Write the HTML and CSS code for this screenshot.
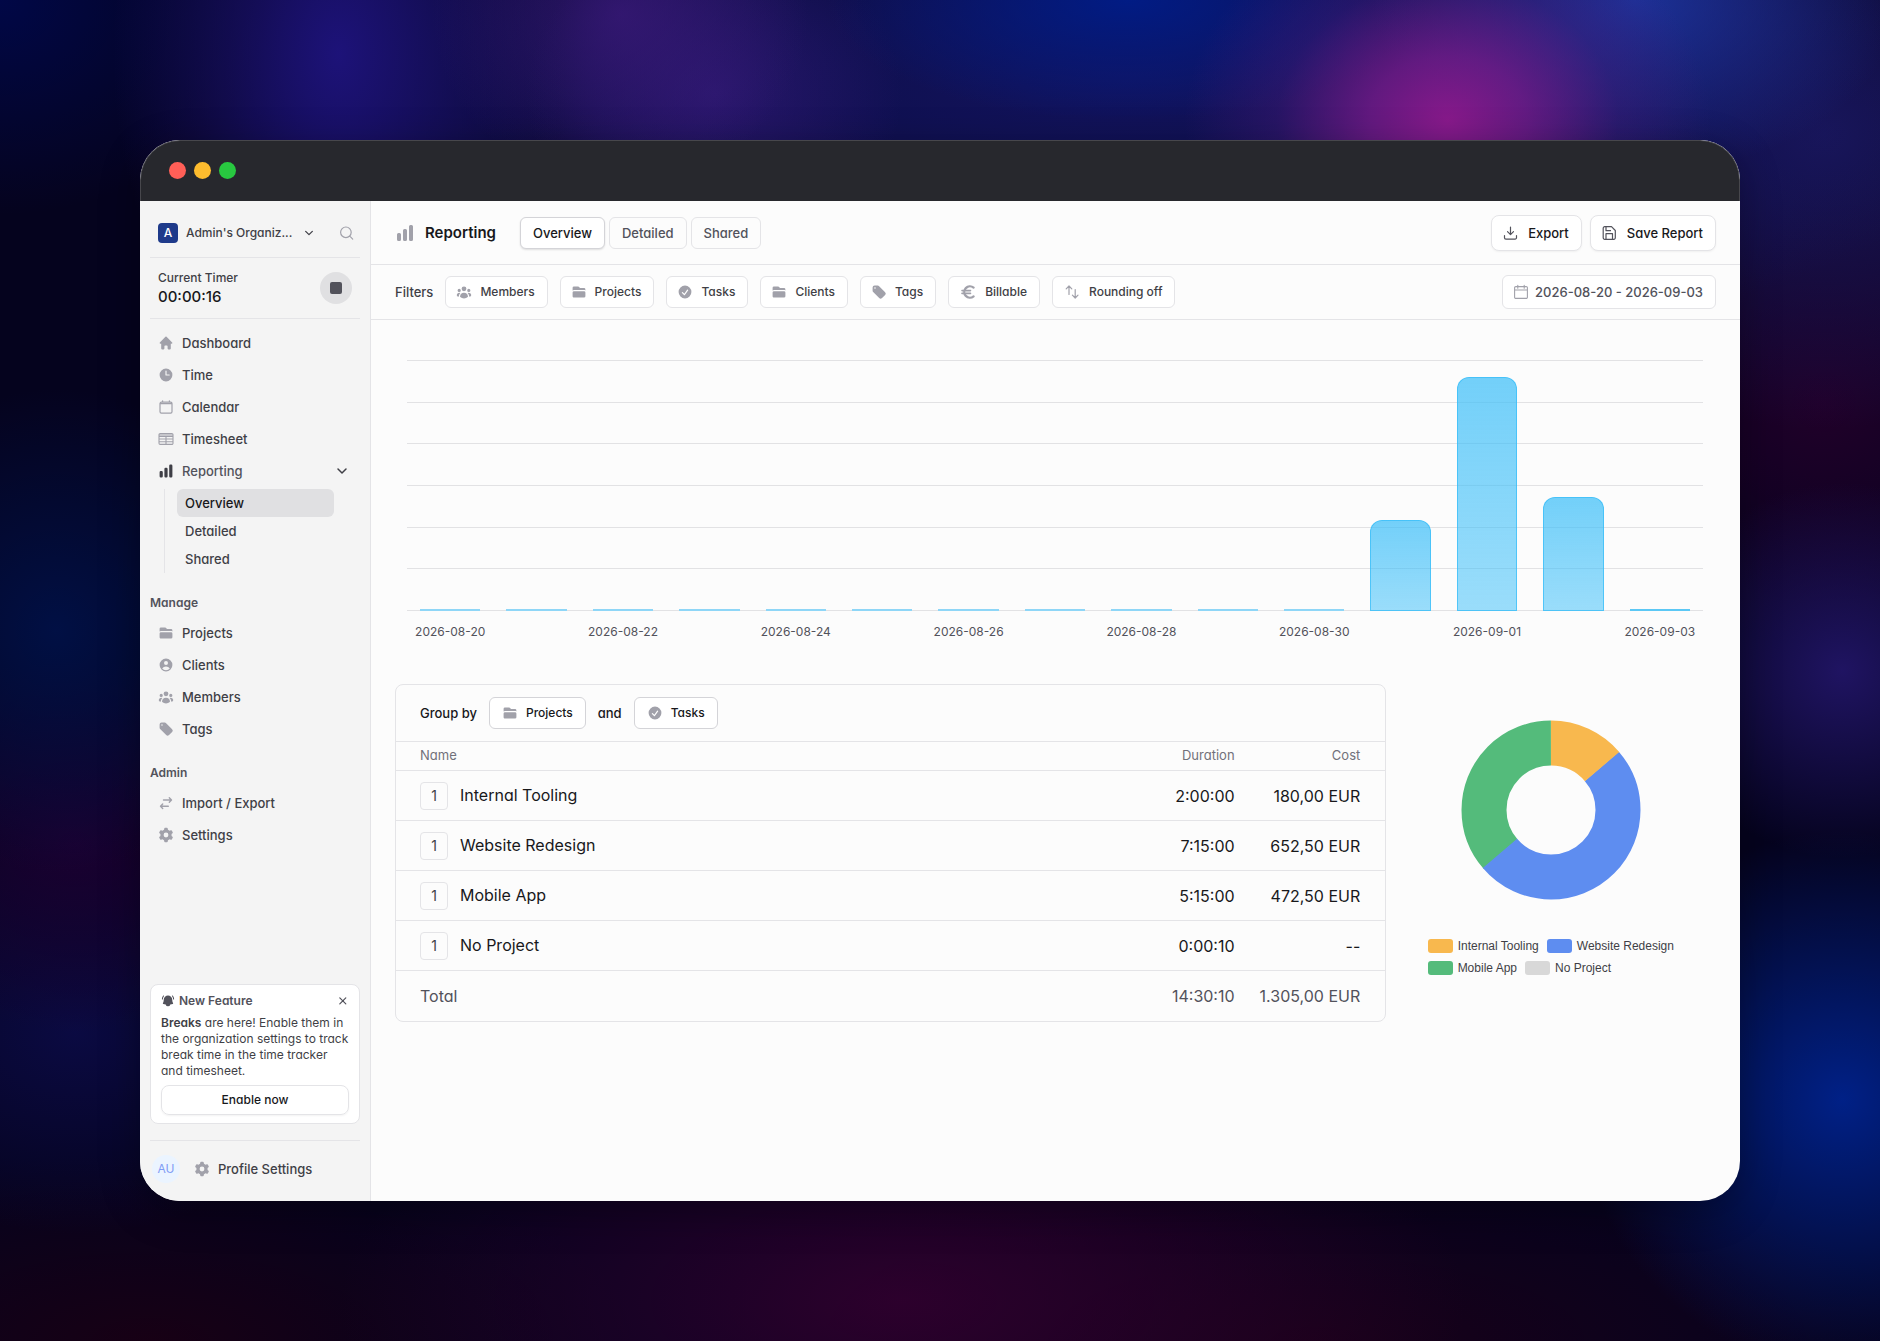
FILE: index.html
```html
<!DOCTYPE html>
<html lang="en">
<head>
    <meta charset="UTF-8">
    <meta name="viewport" content="width=device-width, initial-scale=1.0">
    <title>Reporting - Overview</title>
    <link rel="stylesheet" href="styles.css">
</head>
<body>
    <!-- icon sprite -->
    <svg class="sprite" aria-hidden="true">
        <symbol id="i-home" viewBox="0 0 20 20"><path fill="currentColor" d="M9.293 2.293a1 1 0 0 1 1.414 0l7 7A1 1 0 0 1 17 11h-1v6a1 1 0 0 1-1 1h-2a1 1 0 0 1-1-1v-3a1 1 0 0 0-1-1H9a1 1 0 0 0-1 1v3a1 1 0 0 1-1 1H5a1 1 0 0 1-1-1v-6H3a1 1 0 0 1-.707-1.707l7-7Z"/></symbol>
        <symbol id="i-clock" viewBox="0 0 20 20"><path fill="currentColor" fill-rule="evenodd" d="M10 18a8 8 0 1 0 0-16 8 8 0 0 0 0 16Zm.75-13a.75.75 0 0 0-1.5 0v5c0 .414.336.75.75.75h4a.75.75 0 0 0 0-1.5h-3.25V5Z"/></symbol>
        <symbol id="i-calendar" viewBox="0 0 16 16"><path fill="none" stroke="currentColor" stroke-width="1.2" stroke-linecap="round" d="M3.4 3.2h9.200a1.400 1.400 0 0 1 1.400 1.400v8.200a1.400 1.400 0 0 1-1.400 1.400H3.400a1.400 1.400 0 0 1-1.400-1.400V4.600a1.400 1.400 0 0 1 1.400-1.400ZM4.600 1.800v1.400M11.400 1.800v1.400M2.300 4.700h11.400"/></symbol>
        <symbol id="i-table" viewBox="0 0 16 16"><path fill="none" stroke="currentColor" stroke-width="1.100" d="M2.200 2.600h11.600a1.200 1.200 0 0 1 1.200 1.200v8.400a1.200 1.200 0 0 1-1.200 1.200H2.200A1.200 1.200 0 0 1 1 12.200V3.800a1.200 1.200 0 0 1 1.200-1.200ZM1 5.400h14M1 8h14M1 10.700h14M8 5.400v8"/><path fill="currentColor" opacity=".4" d="M1 3h14v2.400H1z"/></symbol>
        <symbol id="i-chart" viewBox="0 0 20 20"><path fill="currentColor" d="M15.500 2A1.500 1.500 0 0 0 14 3.500v13a1.500 1.500 0 0 0 1.500 1.500h1a1.500 1.500 0 0 0 1.500-1.500v-13A1.500 1.500 0 0 0 16.500 2h-1ZM9.500 6A1.500 1.500 0 0 0 8 7.500v9A1.500 1.500 0 0 0 9.500 18h1a1.500 1.500 0 0 0 1.500-1.500v-9A1.500 1.500 0 0 0 10.500 6h-1ZM3.500 10A1.500 1.500 0 0 0 2 11.500v5A1.500 1.500 0 0 0 3.500 18h1A1.500 1.500 0 0 0 6 16.500v-5A1.500 1.500 0 0 0 4.500 10h-1Z"/></symbol>
        <symbol id="i-folder" viewBox="0 0 20 20"><path fill="currentColor" d="M3.750 3A1.750 1.750 0 0 0 2 4.750v3.260a3.235 3.235 0 0 1 1.750-.510h12.500c.644 0 1.245.188 1.750.510V6.750A1.750 1.750 0 0 0 16.250 5h-4.836a.25.25 0 0 1-.177-.073L9.823 3.513A1.750 1.750 0 0 0 8.586 3H3.750ZM3.750 9A1.750 1.750 0 0 0 2 10.750v4.500c0 .966.784 1.750 1.750 1.750h12.500A1.750 1.750 0 0 0 18 15.250v-4.500A1.750 1.750 0 0 0 16.250 9H3.750Z"/></symbol>
        <symbol id="i-user" viewBox="0 0 20 20"><path fill="currentColor" fill-rule="evenodd" d="M18 10a8 8 0 1 1-16 0 8 8 0 0 1 16 0Zm-5.500-2.500a2.500 2.500 0 1 1-5 0 2.500 2.500 0 0 1 5 0ZM10 12a5.990 5.990 0 0 0-4.793 2.390A6.483 6.483 0 0 0 10 16.500a6.483 6.483 0 0 0 4.793-2.110A5.990 5.990 0 0 0 10 12Z"/></symbol>
        <symbol id="i-group" viewBox="0 0 20 20"><path fill="currentColor" d="M10 9a3 3 0 1 0 0-6 3 3 0 0 0 0 6ZM6 8a2 2 0 1 1-4 0 2 2 0 0 1 4 0ZM1.490 15.326a.78.78 0 0 1-.358-.442 3 3 0 0 1 4.308-3.516 6.484 6.484 0 0 0-1.905 3.959c-.023.222-.014.442.025.654a4.970 4.970 0 0 1-2.070-.655ZM16.440 15.980a4.970 4.970 0 0 0 2.070-.654.78.78 0 0 0 .357-.442 3 3 0 0 0-4.308-3.517 6.484 6.484 0 0 1 1.907 3.960 2.320 2.320 0 0 1-.026.654ZM18 8a2 2 0 1 1-4 0 2 2 0 0 1 4 0ZM5.304 16.190a.844.844 0 0 1-.277-.710 5 5 0 0 1 9.947 0 .843.843 0 0 1-.277.710A6.975 6.975 0 0 1 10 18a6.974 6.974 0 0 1-4.696-1.810Z"/></symbol>
        <symbol id="i-tag" viewBox="0 0 20 20"><path fill="currentColor" fill-rule="evenodd" d="M4.500 2A2.500 2.500 0 0 0 2 4.500v3.879a2.500 2.500 0 0 0 .732 1.767l7.500 7.500a2.500 2.500 0 0 0 3.536 0l3.878-3.878a2.500 2.500 0 0 0 0-3.536l-7.500-7.500A2.500 2.500 0 0 0 8.380 2H4.500ZM5 6a1 1 0 1 0 0-2 1 1 0 0 0 0 2Z"/></symbol>
        <symbol id="i-check" viewBox="0 0 20 20"><path fill="currentColor" fill-rule="evenodd" d="M10 18a8 8 0 1 0 0-16 8 8 0 0 0 0 16Zm3.857-9.809a.75.75 0 0 0-1.214-.882l-3.483 4.790-1.880-1.880a.75.75 0 1 0-1.060 1.061l2.500 2.500a.75.75 0 0 0 1.137-.089l4-5.500Z"/></symbol>
        <symbol id="i-cog" viewBox="0 0 20 20"><path fill="currentColor" fill-rule="evenodd" d="M7.840 1.804A1 1 0 0 1 8.820 1h2.360a1 1 0 0 1 .98.804l.331 1.652a6.993 6.993 0 0 1 1.929 1.115l1.598-.540a1 1 0 0 1 1.186.447l1.180 2.044a1 1 0 0 1-.205 1.251l-1.267 1.113a7.047 7.047 0 0 1 0 2.228l1.267 1.113a1 1 0 0 1 .206 1.250l-1.180 2.045a1 1 0 0 1-1.187.447l-1.598-.540a6.993 6.993 0 0 1-1.929 1.115l-.330 1.652a1 1 0 0 1-.980.804H8.820a1 1 0 0 1-.980-.804l-.331-1.652a6.993 6.993 0 0 1-1.929-1.115l-1.598.540a1 1 0 0 1-1.186-.447l-1.180-2.044a1 1 0 0 1 .205-1.251l1.267-1.114a7.050 7.050 0 0 1 0-2.227L1.821 7.773a1 1 0 0 1-.206-1.250l1.180-2.045a1 1 0 0 1 1.187-.447l1.598.540A6.992 6.992 0 0 1 7.510 3.456l.330-1.652ZM10 13a3 3 0 1 0 0-6 3 3 0 0 0 0 6Z"/></symbol>
        <symbol id="i-swap" viewBox="0 0 16 16"><path fill="none" stroke="currentColor" stroke-width="1.400" stroke-linecap="round" stroke-linejoin="round" d="M5.500 5h7.800M11.300 2.800 13.500 5l-2.200 2.200M10.300 11.300H2.700M4.700 9.100l-2.200 2.200 2.200 2.200"/></symbol>
        <symbol id="i-updown" viewBox="0 0 18 18"><path fill="none" stroke="currentColor" stroke-width="1.200" stroke-linecap="round" stroke-linejoin="round" d="M6 11.500V3.200M3.200 5.800 6 3l2.800 2.800M12.200 6.500v8.300M9.400 12.200l2.800 2.800 2.800-2.800"/></symbol>
        <symbol id="i-euro" viewBox="0 0 18 18"><path fill="none" stroke="currentColor" stroke-width="2.300" stroke-linecap="round" d="M14.600 4.600A5.700 5.700 0 1 0 14.600 13.400"/><path fill="none" stroke="currentColor" stroke-width="1.600" stroke-linecap="round" d="M3 7.600h8.500M3 10.400h8.500"/></symbol>
        <symbol id="i-search" viewBox="0 0 16 16"><path fill="none" stroke="currentColor" stroke-width="1.200" stroke-linecap="round" d="M13.200 7.300a5.300 5.300 0 1 1-10.600 0 5.300 5.300 0 0 1 10.600 0ZM11.800 11.200l2.900 2.900"/></symbol>
        <symbol id="i-down" viewBox="0 0 12 12"><path fill="none" stroke="currentColor" stroke-width="1.500" stroke-linecap="round" stroke-linejoin="round" d="m2 4 4 4 4-4"/></symbol>
        <symbol id="i-close" viewBox="0 0 12 12"><path fill="none" stroke="currentColor" stroke-width="1.200" stroke-linecap="round" d="m2.800 2.800 6 6M8.800 2.800l-6 6"/></symbol>
        <symbol id="i-bell" viewBox="0 0 20 20"><path fill="currentColor" d="M4.200 3.300a.75.75 0 1 0-1.160-.950A7.960 7.960 0 0 0 1.250 7.100a.75.75 0 0 0 1.500.050A6.470 6.470 0 0 1 4.200 3.300ZM16.960 2.350a.75.75 0 1 0-1.160.950 6.470 6.470 0 0 1 1.450 3.850.75.75 0 0 0 1.500-.050 7.960 7.960 0 0 0-1.790-4.750Z"/><path fill="currentColor" d="M10 2a6 6 0 0 0-6 6c0 1.900-.450 3.700-1.260 5.290a.75.75 0 0 0 .515 1.076c1.144.250 2.310.430 3.497.540a3.300 3.300 0 0 0 6.496 0c1.187-.110 2.353-.290 3.497-.540a.75.75 0 0 0 .515-1.076A11.950 11.950 0 0 1 16 8a6 6 0 0 0-6-6Z"/></symbol>
        <symbol id="i-download" viewBox="0 0 16 16"><path fill="none" stroke="currentColor" stroke-width="1.200" stroke-linecap="round" stroke-linejoin="round" d="M8.500 2v7.500M5.500 6.700l3 3 3-3M2.500 10.500v2.200a1.400 1.400 0 0 0 1.400 1.400h9.200a1.400 1.400 0 0 0 1.400-1.400v-2.200"/></symbol>
        <symbol id="i-save" viewBox="0 0 16 16"><path fill="none" stroke="currentColor" stroke-width="1.200" stroke-linejoin="round" d="M3.700 1.700h6.800l3.800 3.800v7.300a1.500 1.500 0 0 1-1.500 1.500H3.700a1.500 1.500 0 0 1-1.500-1.500V3.200a1.500 1.500 0 0 1 1.500-1.500ZM5 14V8.700h6.500V14M5 2v3.700h5"/></symbol>
        <symbol id="i-date" viewBox="0 0 16 16"><path fill="none" stroke="currentColor" stroke-width="1.100" stroke-linecap="round" d="M2.800 2.600h10.400a1.200 1.200 0 0 1 1.200 1.200v9.400a1.200 1.200 0 0 1-1.200 1.200H2.800a1.200 1.200 0 0 1-1.200-1.200V3.800a1.200 1.200 0 0 1 1.200-1.200ZM4.800 1.200v3M11.200 1.200v3M1.600 6h12.800"/></symbol>
    </svg>

    <div class="window">
        <div class="titlebar">
            <span class="light red"></span>
            <span class="light yellow"></span>
            <span class="light green"></span>
        </div>

        <div class="app">
            <aside class="sidebar">
                <div class="org">
                    <button class="org-btn">
                        <span class="org-logo">A</span>
                        <span class="org-name">Admin's Organiz...</span>
                        <svg class="icon-xs"><use href="#i-down"/></svg>
                    </button>
                    <button class="icon-btn" aria-label="Search"><svg class="icon"><use href="#i-search"/></svg></button>
                </div>

                <div class="timer">
                    <div>
                        <div class="timer-label">Current Timer</div>
                        <div class="timer-value">00:00:16</div>
                    </div>
                    <button class="stop-btn" aria-label="Stop timer"><span class="stop"></span></button>
                </div>

                <nav class="nav">
                    <a href="#" class="nav-link"><svg class="icon"><use href="#i-home"/></svg>Dashboard</a>
                    <a href="#" class="nav-link"><svg class="icon"><use href="#i-clock"/></svg>Time</a>
                    <a href="#" class="nav-link"><svg class="icon"><use href="#i-calendar"/></svg>Calendar</a>
                    <a href="#" class="nav-link"><svg class="icon"><use href="#i-table"/></svg>Timesheet</a>
                    <button class="nav-link nav-open"><svg class="icon"><use href="#i-chart"/></svg>Reporting<svg class="icon-sm chevron"><use href="#i-down"/></svg></button>
                    <div class="subnav">
                        <a href="#" class="subnav-link active">Overview</a>
                        <a href="#" class="subnav-link">Detailed</a>
                        <a href="#" class="subnav-link">Shared</a>
                    </div>
                    <div class="nav-title">Manage</div>
                    <a href="#" class="nav-link"><svg class="icon"><use href="#i-folder"/></svg>Projects</a>
                    <a href="#" class="nav-link"><svg class="icon"><use href="#i-user"/></svg>Clients</a>
                    <a href="#" class="nav-link"><svg class="icon"><use href="#i-group"/></svg>Members</a>
                    <a href="#" class="nav-link"><svg class="icon"><use href="#i-tag"/></svg>Tags</a>
                    <div class="nav-title">Admin</div>
                    <a href="#" class="nav-link"><svg class="icon"><use href="#i-swap"/></svg>Import / Export</a>
                    <a href="#" class="nav-link"><svg class="icon"><use href="#i-cog"/></svg>Settings</a>
                </nav>

                <div class="feature">
                    <div class="feature-head">
                        <svg class="icon-bell"><use href="#i-bell"/></svg>
                        <span>New Feature</span>
                        <button class="icon-btn" aria-label="Close"><svg class="icon-sm"><use href="#i-close"/></svg></button>
                    </div>
                    <p><strong>Breaks</strong> are here! Enable them in the organization settings to track break time in the time tracker and timesheet.</p>
                    <button class="feature-btn">Enable now</button>
                </div>

                <div class="profile">
                    <span class="avatar">AU</span>
                    <a href="#" class="profile-link"><svg class="icon"><use href="#i-cog"/></svg>Profile Settings</a>
                </div>
            </aside>

            <main class="main">
                <header class="header">
                    <svg class="icon-lg"><use href="#i-chart"/></svg>
                    <h1>Reporting</h1>
                    <div class="tabs">
                        <a href="#" class="tab active">Overview</a>
                        <a href="#" class="tab">Detailed</a>
                        <a href="#" class="tab">Shared</a>
                    </div>
                    <div class="actions">
                        <button class="action-btn"><svg class="icon"><use href="#i-download"/></svg>Export</button>
                        <button class="action-btn"><svg class="icon"><use href="#i-save"/></svg>Save Report</button>
                    </div>
                </header>

                <div class="filters">
                    <span class="filters-label">Filters</span>
                    <div class="filter-list">
                        <button class="filter-btn"><svg class="icon"><use href="#i-group"/></svg>Members</button>
                        <button class="filter-btn"><svg class="icon"><use href="#i-folder"/></svg>Projects</button>
                        <button class="filter-btn"><svg class="icon"><use href="#i-check"/></svg>Tasks</button>
                        <button class="filter-btn"><svg class="icon"><use href="#i-folder"/></svg>Clients</button>
                        <button class="filter-btn"><svg class="icon"><use href="#i-tag"/></svg>Tags</button>
                        <button class="filter-btn"><svg class="icon icon-md"><use href="#i-euro"/></svg>Billable</button>
                        <button class="filter-btn"><svg class="icon icon-md"><use href="#i-updown"/></svg>Rounding off</button>
                    </div>
                    <button class="date-btn"><svg class="icon"><use href="#i-date"/></svg>2026-08-20 - 2026-09-03</button>
                </div>

                <section class="chart">
                    <div class="plot">
                        <div class="gridlines"><i></i><i></i><i></i><i></i><i></i><i></i><i></i></div>
                        <div class="bars">
                            <span class="bar zero"></span>
                            <span class="bar zero"></span>
                            <span class="bar zero"></span>
                            <span class="bar zero"></span>
                            <span class="bar zero"></span>
                            <span class="bar zero"></span>
                            <span class="bar zero"></span>
                            <span class="bar zero"></span>
                            <span class="bar zero"></span>
                            <span class="bar zero"></span>
                            <span class="bar zero"></span>
                            <span class="bar" style="height: 36.4%"></span>
                            <span class="bar" style="height: 93.2%"></span>
                            <span class="bar" style="height: 45.3%"></span>
                            <span class="bar zero last"></span>
                        </div>
                    </div>
                    <div class="axis">
                        <span>2026-08-20</span><span></span>
                        <span>2026-08-22</span><span></span>
                        <span>2026-08-24</span><span></span>
                        <span>2026-08-26</span><span></span>
                        <span>2026-08-28</span><span></span>
                        <span>2026-08-30</span><span></span>
                        <span>2026-09-01</span><span></span>
                        <span>2026-09-03</span>
                    </div>
                </section>

                <section class="summary">
                    <div class="card">
                        <div class="group-by">
                            <span>Group by</span>
                            <button class="filter-btn strong"><svg class="icon"><use href="#i-folder"/></svg>Projects</button>
                            <span>and</span>
                            <button class="filter-btn strong"><svg class="icon"><use href="#i-check"/></svg>Tasks</button>
                        </div>
                        <table class="table">
                            <thead>
                                <tr><th class="name">Name</th><th>Duration</th><th>Cost</th></tr>
                            </thead>
                            <tbody>
                                <tr><td class="name"><button class="count">1</button>Internal Tooling</td><td>2:00:00</td><td>180,00 EUR</td></tr>
                                <tr><td class="name"><button class="count">1</button>Website Redesign</td><td>7:15:00</td><td>652,50 EUR</td></tr>
                                <tr><td class="name"><button class="count">1</button>Mobile App</td><td>5:15:00</td><td>472,50 EUR</td></tr>
                                <tr><td class="name"><button class="count">1</button>No Project</td><td>0:00:10</td><td>--</td></tr>
                            </tbody>
                            <tfoot>
                                <tr><td class="name">Total</td><td>14:30:10</td><td>1.305,00 EUR</td></tr>
                            </tfoot>
                        </table>
                    </div>

                    <div class="pie">
                        <svg class="donut" viewBox="0 0 180 180" role="img" aria-label="Duration by project">
                            <g fill="none" stroke-width="45" transform="rotate(-90 90 90)">
                                <circle cx="90" cy="90" r="67" pathLength="52210" stroke="#54bb7b" stroke-dasharray="19000 52210" stroke-dashoffset="-33200"/>
                                <circle cx="90" cy="90" r="67" pathLength="52210" stroke="#5e8df0" stroke-dasharray="26150 52210" stroke-dashoffset="-7150"/>
                                <circle cx="90" cy="90" r="67" pathLength="52210" stroke="#f8b84e" stroke-dasharray="7200 52210"/>
                            </g>
                        </svg>
                        <ul class="legend">
                            <li><span class="swatch orange"></span>Internal Tooling</li>
                            <li><span class="swatch blue"></span>Website Redesign</li>
                            <li><span class="swatch green"></span>Mobile App</li>
                            <li><span class="swatch gray"></span>No Project</li>
                        </ul>
                    </div>
                </section>
            </main>
        </div>
    </div>
</body>
</html>
```
FILE: styles.css
```css
* {
    box-sizing: border-box;
}
body {
    margin: 0;
    padding: 140px;
    min-height: 100vh;
    display: flex;
    font-family: Inter, "Liberation Sans", sans-serif;
    font-feature-settings: "cv11";
    font-size: 14px;
    line-height: 20px;
    color: #18181b;
    background-color: #05031e;
    background-image:
        radial-gradient(ellipse 14% 16% at 77% 9%, rgba(142, 26, 142, 0.95), rgba(125, 28, 142, 0.75) 30%, rgba(80, 28, 130, 0.35) 65%, transparent),
        radial-gradient(ellipse 14% 13% at 87% 0%, rgba(30, 55, 165, 0.85), transparent),
        radial-gradient(ellipse 16% 9% at 60% 0%, rgba(0, 28, 135, 0.95), transparent),
        radial-gradient(ellipse 10% 13% at 33% 1%, rgba(62, 26, 125, 0.7), transparent),
        radial-gradient(ellipse 10% 12% at 38% 7%, rgba(58, 28, 130, 0.6), transparent),
        radial-gradient(ellipse 12% 26% at 18% 4%, rgba(30, 19, 125, 0.95), rgba(24, 16, 100, 0.6) 55%, transparent),
        radial-gradient(ellipse 48% 22% at 60% 6%, rgba(20, 22, 105, 0.85), rgba(20, 20, 95, 0.6) 60%, transparent),
        radial-gradient(ellipse 18% 22% at 97% 10%, rgba(28, 24, 95, 0.9), transparent),
        radial-gradient(ellipse 14% 16% at 0% 0%, rgba(0, 8, 75, 0.9), transparent),
        radial-gradient(ellipse 12% 18% at 3% 47%, rgba(0, 18, 75, 0.85), transparent),
        radial-gradient(ellipse 12% 14% at 4% 63%, rgba(28, 0, 50, 0.9), transparent),
        radial-gradient(ellipse 14% 15% at 4% 77%, rgba(12, 12, 75, 0.8), transparent),
        radial-gradient(ellipse 14% 20% at 98% 82%, rgba(0, 34, 140, 0.95), transparent),
        radial-gradient(ellipse 10% 14% at 98% 50%, rgba(38, 24, 115, 0.8), transparent),
        radial-gradient(ellipse 14% 18% at 97% 30%, rgba(34, 0, 42, 0.95), transparent),
        radial-gradient(ellipse 30% 18% at 48% 97%, rgba(48, 0, 46, 0.9), transparent),
        radial-gradient(ellipse 32% 14% at 70% 100%, rgba(26, 0, 24, 0.9), transparent),
        radial-gradient(ellipse 26% 14% at 8% 100%, rgba(24, 0, 20, 0.95), transparent);
}
button {
    font: inherit;
    font-feature-settings: inherit;
    color: inherit;
    background: none;
    border: 0;
    padding: 0;
    cursor: pointer;
}
a {
    color: inherit;
    text-decoration: none;
}
.sprite {
    display: none;
}
.icon {
    width: 16px;
    height: 16px;
    flex: none;
    color: #a1a1aa;
}
.icon-xs {
    width: 10px;
    height: 10px;
    flex: none;
}
.icon-sm {
    width: 12px;
    height: 12px;
    flex: none;
}
.icon-md {
    width: 18px;
    height: 18px;
}
.icon-lg {
    width: 20px;
    height: 20px;
    flex: none;
    color: #a1a1aa;
}
.icon-btn {
    display: flex;
}

/* window frame */
.window {
    flex: 1;
    min-width: 0;
    display: flex;
    flex-direction: column;
    border-radius: 40px;
    overflow: hidden;
    background: #fcfcfc;
    box-shadow: 0 10px 40px rgba(0, 0, 0, 0.3);
}
.titlebar {
    height: 61px;
    flex: none;
    display: flex;
    align-items: center;
    gap: 8px;
    padding: 0 28px 2px;
    background: #27282d;
    border: 1px solid #47474c;
    border-bottom: 0;
    border-radius: 40px 40px 0 0;
}
.light {
    width: 17px;
    height: 17px;
    border-radius: 50%;
}
.red { background: #ff5f57; }
.yellow { background: #febc2e; }
.light.green { background: #28c840; }
.app {
    flex: 1;
    display: flex;
}

/* sidebar */
.sidebar {
    width: 231px;
    flex: none;
    display: flex;
    flex-direction: column;
    padding: 8px 10px 18px;
    background: #f4f4f4;
    border-right: 1px solid #e4e4e7;
    color: #3f3f46;
    font-weight: 500;
}
.org {
    height: 49px;
    display: flex;
    align-items: center;
    justify-content: space-between;
    padding: 0 6px 0 8px;
    border-bottom: 1px solid #e4e4e7;
}
.org-btn {
    display: flex;
    align-items: center;
    font-size: 12px;
    font-weight: 500;
}
.org-logo {
    width: 20px;
    height: 20px;
    border-radius: 4px;
    background: #1e3a8a;
    color: #fff;
}
.org-name {
    min-width: 108px;
    margin: 0 10px 0 8px;
    white-space: nowrap;
    text-align: left;
}
.timer {
    height: 61px;
    display: flex;
    align-items: center;
    justify-content: space-between;
    padding: 0 8px;
    border-bottom: 1px solid #e4e4e7;
}
.timer-label {
    font-size: 12px;
    line-height: 18px;
}
.timer-value {
    font-size: 15px;
    color: #18181b;
}
.stop-btn {
    width: 32px;
    height: 32px;
    display: flex;
    align-items: center;
    justify-content: center;
    border-radius: 50%;
    background: #e0e0e2;
}
.stop {
    width: 12px;
    height: 12px;
    border-radius: 2px;
    background: #52525b;
}
.nav {
    display: flex;
    flex-direction: column;
    padding-top: 8px;
}
.nav-link {
    height: 32px;
    display: flex;
    align-items: center;
    gap: 8px;
    padding: 0 8px;
    font-size: 13px;
    font-weight: 500;
}
.nav-open {
    color: #52525b;
}
.nav-open .icon,
.nav-open .chevron {
    color: #3f3f46;
}
.chevron {
    margin-left: auto;
    margin-right: 4px;
}
.subnav {
    margin: 2px 26px 2px 14px;
    padding-left: 12px;
    border-left: 1px solid #e4e4e7;
}
.subnav-link {
    display: block;
    padding: 4px 8px;
    border-radius: 6px;
    font-size: 13px;
}
.subnav-link.active {
    background: #e0e0e2;
    color: #18181b;
}
.nav-title {
    margin-top: 18px;
    padding-bottom: 4px;
    font-size: 12px;
    font-weight: 600;
    color: #52525b;
}
.feature {
    margin-top: auto;
    padding: 6px 10px 8px;
    border: 1px solid #e4e4e7;
    border-radius: 8px;
    background: #fff;
}
.feature-head {
    display: flex;
    align-items: center;
    gap: 4px;
    font-size: 12px;
    font-weight: 600;
    color: #52525b;
}
.feature-head .icon-btn {
    margin-left: auto;
}
.icon-bell {
    width: 14px;
    height: 14px;
}
.feature p {
    margin: 4px -2px 6px 0;
    font-size: 12px;
    line-height: 16px;
    font-weight: 400;
}
.feature strong {
    font-weight: 600;
}
.feature-btn {
    width: 100%;
    height: 30px;
    border: 1px solid #e4e4e7;
    border-radius: 8px;
    box-shadow: 0 1px 2px rgba(0, 0, 0, 0.05);
    font-size: 12px;
    font-weight: 500;
    color: #18181b;
}
.profile {
    margin-top: 16px;
    padding-top: 14px;
    display: flex;
    align-items: center;
    gap: 14px;
    border-top: 1px solid #e4e4e7;
}
.avatar {
    width: 28px;
    height: 28px;
    margin-left: 2px;
    border-radius: 50%;
    background: #ebf4ff;
    color: #7f9cf5;
    font-size: 12px;
    font-weight: 400;
    line-height: 28px;
    text-align: center;
}
.profile-link {
    display: flex;
    align-items: center;
    gap: 8px;
    font-size: 13px;
}

/* main */
.main {
    flex: 1;
    min-width: 0;
}
.header {
    height: 64px;
    display: flex;
    align-items: center;
    padding: 0 24px;
    border-bottom: 1px solid #e4e4e7;
}
h1 {
    margin: 0 24px 0 10px;
    font-size: 15px;
    font-weight: 600;
}
.tabs {
    display: flex;
    gap: 4px;
}
.tab {
    padding: 5px 12px;
    border: 1px solid #e4e4e7;
    border-radius: 6px;
    font-size: 13px;
    font-weight: 500;
    color: #52525b;
}
.tab.active {
    background: #fff;
    border-color: #d4d4d8;
    box-shadow: 0 1px 2px rgba(0, 0, 0, 0.12);
    color: #18181b;
}
.actions {
    margin-left: auto;
    display: flex;
    gap: 8px;
}
.action-btn {
    height: 36px;
    display: flex;
    align-items: center;
    gap: 10px;
    padding: 0 12px 0 10px;
    border: 1px solid #e4e4e7;
    border-radius: 8px;
    background: #fff;
    box-shadow: 0 1px 2px rgba(0, 0, 0, 0.05);
    font-size: 13px;
    font-weight: 500;
}
.action-btn .icon {
    color: #52525b;
}
.filters {
    height: 55px;
    display: flex;
    align-items: center;
    gap: 12px;
    padding: 0 24px;
    border-bottom: 1px solid #e4e4e7;
    color: #3f3f46;
}
.filters-label {
    font-size: 13px;
    font-weight: 500;
}
.filter-list {
    display: flex;
    gap: 12px;
}
.filter-btn {
    height: 32px;
    display: flex;
    align-items: center;
    gap: 8px;
    padding: 0 12px 0 10px;
    border: 1px solid #e4e4e7;
    border-radius: 6px;
    background: #fff;
    font-size: 12px;
    font-weight: 500;
}
.filter-btn.strong {
    padding: 0 12px;
    border-color: #d4d4d8;
}
.date-btn {
    height: 34px;
    margin-left: auto;
    display: flex;
    align-items: center;
    gap: 6px;
    padding: 0 12px 0 10px;
    border: 1px solid #e4e4e7;
    border-radius: 6px;
    background: #fff;
    font-size: 13px;
    font-weight: 500;
    color: #52525b;
}

/* bar chart */
.chart {
    padding: 40px 37px 0 36px;
}
.plot {
    display: grid;
    height: 251px;
}
.gridlines,
.bars {
    grid-area: 1 / 1;
}
.gridlines {
    display: flex;
    flex-direction: column;
    justify-content: space-between;
}
.gridlines i {
    height: 1px;
    background: #e2e2e4;
}
.bars,
.axis {
    display: grid;
    grid-template-columns: repeat(15, minmax(0, 1fr));
    justify-items: center;
}
.bars {
    height: 251px;
    align-items: end;
}
.bar {
    width: 70%;
    border: 1px solid rgba(56, 189, 248, 0.75);
    border-radius: 12px 12px 0 0;
    background: linear-gradient(rgba(56, 189, 248, 0.7), rgba(56, 189, 248, 0.5));
    background-origin: border-box;
}
.bar.zero {
    height: 2px;
    border: 0;
    border-radius: 0;
    background: #8ed6f7;
}
.bar.last {
    background: #5cc8f5;
}
.axis {
    padding-top: 11px;
    font-size: 12px;
    color: #52525b;
    white-space: nowrap;
}

/* table and donut */
.summary {
    display: flex;
    padding: 42px 24px 0;
}
.card {
    flex: 3;
    border: 1px solid #e4e4e7;
    border-radius: 8px;
}
.group-by {
    height: 56px;
    display: flex;
    align-items: center;
    gap: 12px;
    padding: 0 24px;
    font-size: 13px;
    font-weight: 500;
}
.table {
    width: 100%;
    border-collapse: collapse;
    font-size: 16px;
}
.table tr {
    height: 50px;
    border-top: 1px solid #e4e4e7;
}
.table thead tr {
    height: 29px;
    font-size: 13px;
    color: #71717a;
}
.table tfoot {
    color: #52525b;
}
th,
td {
    padding: 0 25px 0 0;
    font-weight: 400;
    text-align: right;
    white-space: nowrap;
}
th {
    padding-bottom: 2px;
}
.name {
    width: 100%;
    padding-left: 24px;
    text-align: left;
}
.count {
    width: 28px;
    height: 28px;
    margin-right: 12px;
    border: 1px solid #e4e4e7;
    border-radius: 4px;
    font-size: 14px;
    color: #3f3f46;
}
.pie {
    flex: 1;
    display: flex;
    flex-direction: column;
    align-items: center;
    padding-top: 36px;
}
.donut {
    width: 180px;
    height: 180px;
}
.legend {
    width: 247px;
    margin: 35px 0 0;
    padding: 0;
    display: flex;
    flex-wrap: wrap;
    gap: 0 8px;
    list-style: none;
    font-family: "Liberation Sans", Arial, sans-serif;
    font-size: 12px;
    line-height: 22px;
    color: #3f3f46;
}
.legend li {
    display: flex;
    align-items: center;
    gap: 5px;
    white-space: nowrap;
}
.swatch {
    width: 25px;
    height: 14px;
    border-radius: 3px;
}
.orange { background: #f8b84e; }
.blue { background: #5e8df0; }
.swatch.green { background: #54bb7b; }
.gray { background: #d8d8d8; }
```
